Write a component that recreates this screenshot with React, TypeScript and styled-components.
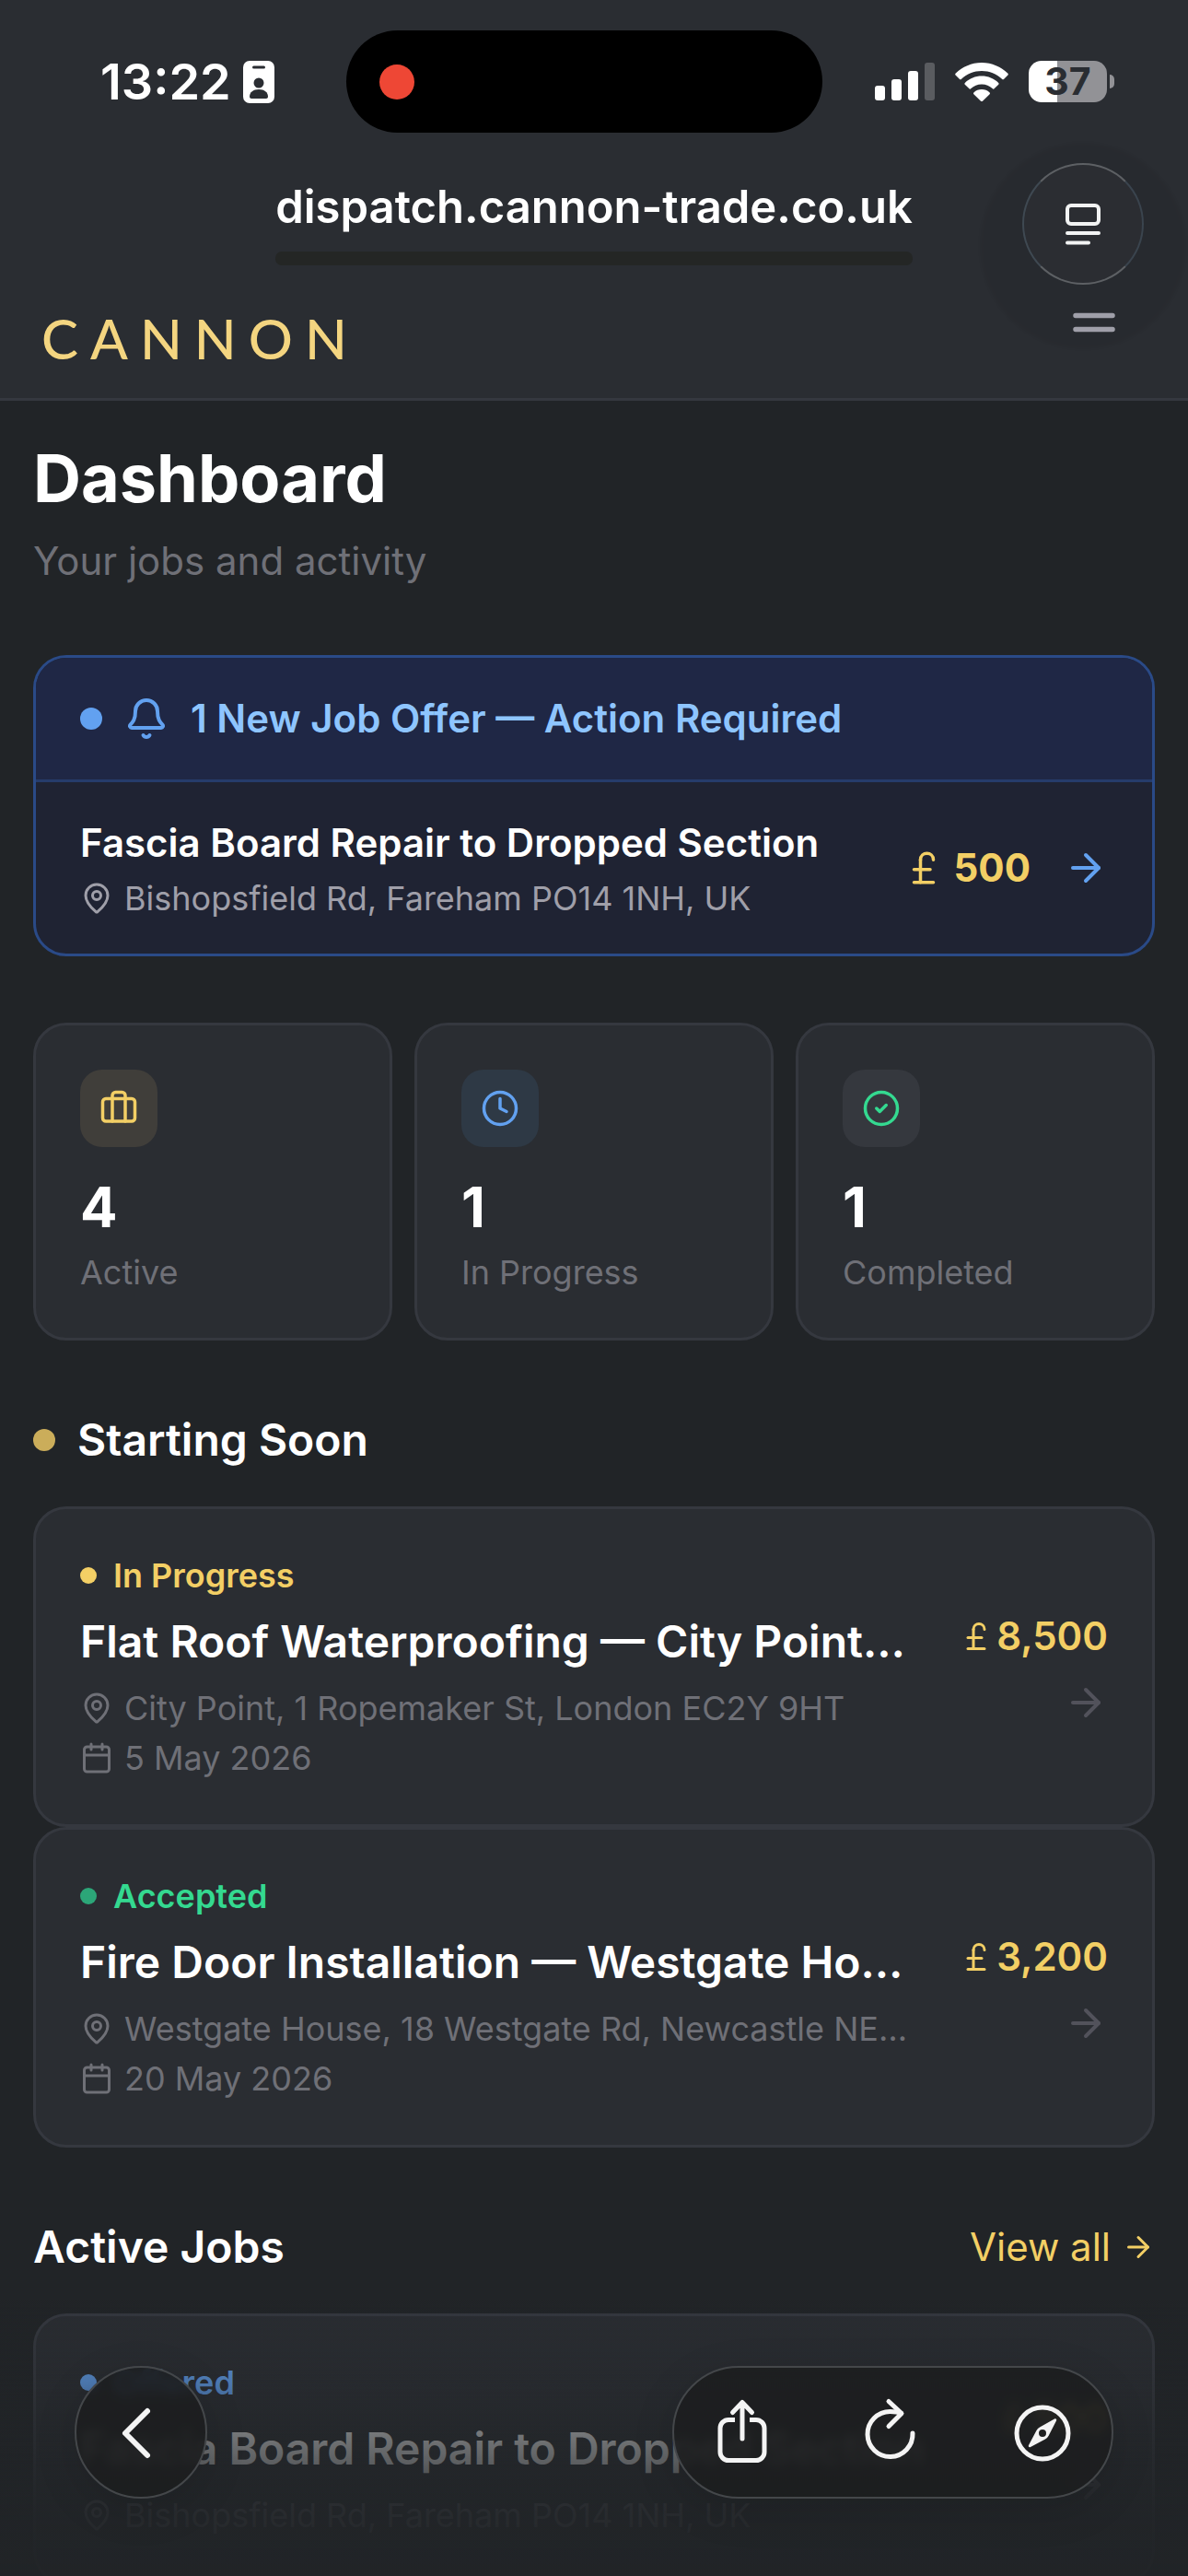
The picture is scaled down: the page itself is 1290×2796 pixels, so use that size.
import React from "react";
import styled, { createGlobalStyle } from "styled-components";
import {
  ArrowRight,
  Bell,
  Briefcase,
  Calendar,
  CircleCheck,
  Clock,
  MapPin,
  PoundSterling,
} from "lucide-react";

const c = {
  page: "#212427",
  panel: "#2a2d32",
  line: "#35383f",
  text: "#ffffff",
  muted: "#6f7077",
  soft: "#9f9fa9",
  faint: "#52525b",
  gold: "#f3cf65",
  logo: "#f4d580",
  blue: "#62a1f0",
  sky: "#8ec5ff",
  green: "#34d990",
};

const GlobalStyle = createGlobalStyle`
  *, *::before, *::after { box-sizing: border-box; }
  body {
    margin: 0;
    background: ${c.page};
    color: ${c.text};
    font-family: Inter, "Liberation Sans", sans-serif;
    -webkit-font-smoothing: antialiased;
  }
  h1, h2, h3, p { margin: 0; }
  button { font: inherit; color: inherit; border: 0; padding: 0; background: none; cursor: pointer; }
  a { color: inherit; text-decoration: none; }
  svg { display: block; flex: none; overflow: visible; }
`;

const Screen = styled.div`
  height: 100vh;
  overflow: hidden;
`;

/* ---------- top chrome ---------- */

const Chrome = styled.header`
  background: ${c.panel};
  border-bottom: 3px solid ${c.line};
`;

const StatusBar = styled.div`
  display: grid;
  grid-template-columns: 376fr 517fr 397fr;
  align-items: center;
  padding: 33px 0;
`;

const StatusLeft = styled.div`
  display: flex;
  align-items: center;
  gap: 13px;
  padding-left: 109px;
`;

const Time = styled.span`
  font-size: 54px;
  line-height: 60px;
  font-weight: 600;
`;

const Island = styled.div`
  display: flex;
  align-items: center;
  height: 111px;
  padding-left: 36px;
  border-radius: 56px;
  background: #000;
`;

const RecordDot = styled.span`
  width: 38px;
  height: 38px;
  border-radius: 50%;
  background: #ee4735;
`;

const StatusRight = styled.div`
  display: flex;
  align-items: center;
  justify-content: flex-end;
  gap: 22px;
  padding-right: 80px;
`;

const Battery = styled.div`
  display: flex;
  align-items: center;
  gap: 3px;
`;

const BatteryBody = styled.span`
  width: 85px;
  height: 45px;
  border-radius: 14px;
  background: linear-gradient(90deg, #fff 31px, #929296 31px);
  color: ${c.panel};
  font-size: 41px;
  line-height: 45px;
  font-weight: 700;
  text-align: center;
`;

const BatteryCap = styled.span`
  width: 5px;
  height: 15px;
  border-radius: 0 8px 8px 0;
  background: #929296;
`;

const AddressRow = styled.div`
  display: grid;
  grid-template-columns: 1fr auto 1fr;
  padding: 0 48px;
`;

const Address = styled.div`
  grid-column: 2;
  padding-top: 18px;
  font-size: 49px;
  line-height: 60px;
  font-weight: 600;
  &::after {
    content: "";
    display: block;
    height: 15px;
    margin-top: 18px;
    border-radius: 7px;
    background: #242625;
  }
`;

const ReaderButton = styled.button`
  display: grid;
  place-items: center;
  justify-self: end;
  width: 132px;
  height: 132px;
  border: 2px solid #55585d;
  border-color: #5d6064 #3a444e #5d6064 #3f4952;
  border-radius: 50%;
  background: #2b2d32;
  box-shadow: 0 24px 3px 46px rgba(0, 0, 0, 0.05);
`;

const SiteBar = styled.div`
  display: flex;
  align-items: flex-start;
  justify-content: space-between;
  height: 123px;
  padding: 0 66px 0 45px;
`;

const Logo = styled.a`
  font-family: Lato, "Liberation Sans", sans-serif;
  font-size: 60px;
  line-height: 117px;
  font-weight: 500;
  letter-spacing: 13px;
  color: ${c.logo};
`;

const MenuButton = styled.button`
  display: grid;
  place-items: center;
  width: 72px;
  height: 81px;
`;

/* ---------- page ---------- */

const Main = styled.main`
  display: flex;
  flex-direction: column;
  gap: 72px;
  padding: 36px;
`;

const Title = styled.h1`
  font-size: 72px;
  line-height: 96px;
  font-weight: 700;
`;

const Subtitle = styled.p`
  margin-top: 12px;
  font-size: 42px;
  line-height: 60px;
  color: ${c.muted};
`;

const Offer = styled.section`
  border: 3px solid #2a4a87;
  border-radius: 36px;
  overflow: hidden;
  background: #1f2333;
`;

const OfferHead = styled.div`
  display: flex;
  align-items: center;
  gap: 24px;
  padding: 36px 48px;
  border-bottom: 3px solid #263c6b;
  background: #1f2745;
`;

const OfferHeading = styled.h2`
  font-size: 42px;
  line-height: 60px;
  font-weight: 600;
  color: ${c.sky};
`;

const OfferBody = styled.a`
  display: flex;
  align-items: center;
  gap: 36px;
  padding: 36px 48px;
`;

const Grow = styled.div`
  display: flex;
  flex-direction: column;
  flex: 1;
  min-width: 0;
`;

const OfferTitle = styled.h3`
  margin-bottom: 6px;
  font-size: 42px;
  line-height: 60px;
  font-weight: 600;
`;

const Dot = styled.span<{ $size: number; $color: string }>`
  flex: none;
  width: ${(p) => p.$size}px;
  height: ${(p) => p.$size}px;
  border-radius: 50%;
  background: ${(p) => p.$color};
`;

const Meta = styled.p<{ $color?: string }>`
  display: flex;
  align-items: center;
  gap: 12px;
  font-size: 36px;
  line-height: 48px;
  white-space: nowrap;
  color: ${(p) => p.$color ?? c.muted};
  & + & { margin-top: 6px; }
`;

const Price = styled.span<{ $gap: number; $weight: number }>`
  display: flex;
  align-items: center;
  gap: ${(p) => p.$gap}px;
  font-size: 42px;
  line-height: 60px;
  font-weight: ${(p) => p.$weight};
  color: ${c.gold};
`;

const Stats = styled.section`
  display: grid;
  grid-template-columns: repeat(3, 1fr);
  gap: 24px;
`;

const Card = styled.div`
  border: 3px solid ${c.line};
  border-radius: 36px;
  background: ${c.panel};
  padding: 48px;
`;

const StatCard = styled(Card)`
  padding-bottom: 47px;
`;

const StatIcon = styled.div<{ $bg: string; $color: string }>`
  display: grid;
  place-items: center;
  width: 84px;
  height: 84px;
  margin-bottom: 24px;
  border-radius: 24px;
  background: ${(p) => p.$bg};
  color: ${(p) => p.$color};
`;

const StatValue = styled.p`
  font-size: 60px;
  line-height: 82px;
  font-weight: 700;
`;

const StatLabel = styled.p`
  margin-top: 6px;
  font-size: 36px;
  line-height: 48px;
  color: ${c.muted};
`;

const SectionHead = styled.div`
  display: flex;
  align-items: center;
  gap: 24px;
  margin-bottom: 36px;
`;

const SectionTitle = styled.h2`
  font-size: 48px;
  line-height: 72px;
  font-weight: 600;
`;

const ViewAll = styled.a`
  display: flex;
  align-items: center;
  gap: 12px;
  margin-left: auto;
  font-size: 42px;
  line-height: 60px;
  color: ${c.gold};
`;

const JobLink = styled(Card).attrs({ as: "a" })<{ href?: string }>`
  display: flex;
  align-items: center;
  gap: 48px;
`;

const Badge = styled.p<{ $color: string }>`
  display: flex;
  align-items: center;
  gap: 18px;
  margin-bottom: 12px;
  font-size: 36px;
  line-height: 48px;
  font-weight: 600;
  color: ${(p) => p.$color};
`;

const JobTitle = styled.h3`
  margin-bottom: 12px;
  font-size: 48px;
  line-height: 72px;
  font-weight: 600;
  white-space: nowrap;
`;

const JobSide = styled.div`
  display: flex;
  flex-direction: column;
  align-items: flex-end;
  gap: 18px;
  color: ${c.faint};
`;

/* ---------- bottom toolbar ---------- */

const Fade = styled.div`
  position: fixed;
  inset: auto 0 0 0;
  height: 300px;
  pointer-events: none;
  background: linear-gradient(
    180deg,
    rgba(33, 36, 39, 0) 0%,
    rgba(33, 36, 39, 0.32) 30%,
    rgba(33, 36, 39, 0.62) 48%,
    rgba(33, 36, 39, 0.74) 60%,
    rgba(33, 36, 39, 0.88) 71%,
    rgba(33, 36, 39, 0.92) 80%,
    rgba(33, 36, 39, 0.95) 100%
  );
`;

const Toolbar = styled.nav`
  position: fixed;
  inset: auto 0 0 0;
  display: flex;
  justify-content: space-between;
  padding: 0 81px 84px;
`;

const Glass = styled.div<{ $pill?: boolean }>`
  display: flex;
  align-items: center;
  justify-content: space-between;
  width: ${(p) => (p.$pill ? 479 : 144)}px;
  height: 144px;
  padding: ${(p) => (p.$pill ? "0 27px" : "0")};
  border: 2px solid #44474a;
  border-radius: 72px;
  background: rgba(28, 29, 30, 0.86);
  backdrop-filter: blur(6px);
  box-shadow: 0 12px 48px rgba(0, 0, 0, 0.12);
`;

const ToolButton = styled.button`
  display: grid;
  place-items: center;
  flex: 0 0 auto;
  width: 96px;
  height: 140px;
  ${Glass} > &:only-child { width: 100%; }
`;

/* ---------- drawings ---------- */

const ContactBadge = () => (
  <svg width="34" height="46" viewBox="0 0 34 46" aria-hidden="true">
    <rect width="34" height="46" rx="7" fill="#fff" />
    <rect x="10" y="5.5" width="14" height="3" rx="1.5" fill={c.panel} />
    <circle cx="17" cy="24" r="5.5" fill={c.panel} />
    <path d="M7 39c0-5 4-8 10-8s10 3 10 8c0 1-1 2-2 2H9c-1 0-2-1-2-2z" fill={c.panel} />
  </svg>
);

const Signal = () => (
  <svg width="65" height="41" viewBox="0 0 65 41" fill="#fff" aria-hidden="true">
    <rect y="25" width="11" height="16" rx="3" />
    <rect x="18" y="18" width="11" height="23" rx="3" />
    <rect x="36" y="9" width="11" height="32" rx="3" />
    <rect x="54" width="11" height="41" rx="3" fill="#5a5c60" />
  </svg>
);

const Wifi = () => (
  <svg width="58" height="42" viewBox="0 0 58 42" fill="#fff" aria-hidden="true">
    <path d="M29 0C18 0 8 4.500 .8 11.500c-.8.800-.8 1.500 0 2.300l4 4c.7.700 1.500.700 2.200 0C13 12.200 20.500 9 29 9s16 3.200 22 8.800c.7.700 1.500.700 2.200 0l4-4c.8-.8.8-1.500 0-2.300C50 4.500 40 0 29 0z" />
    <path d="M29 14.500c-7 0-13.300 2.700-18 7.200-.8.800-.8 1.500 0 2.200l4.200 4.200c.7.700 1.400.700 2.200 0 3-2.900 7-4.600 11.600-4.600s8.600 1.700 11.600 4.600c.8.700 1.500.700 2.200 0l4.200-4.200c.8-.7.8-1.400 0-2.200-4.700-4.500-11-7.200-18-7.200z" />
    <path d="M29 29c-3.300 0-6.200 1.200-8.400 3.200-.8.700-.8 1.500 0 2.200l7.200 7c.8.800 1.600.800 2.400 0l7.200-7c.8-.7.8-1.500 0-2.200C35.200 30.200 32.300 29 29 29z" />
  </svg>
);

const ReaderIcon = () => (
  <svg width="38" height="46" viewBox="0 0 38 46" fill="none" stroke="#f2f3f3" strokeWidth="4" strokeLinecap="round" aria-hidden="true">
    <rect x="2" y="3" width="34" height="20" rx="4" />
    <path d="M2 33h34M2 43.500h23" />
  </svg>
);

const MenuIcon = () => (
  <svg width="46" height="22" viewBox="0 0 46 22" stroke={c.soft} strokeWidth="5.500" strokeLinecap="round" aria-hidden="true">
    <path d="M3 3.500h40M3 18.500h40" />
  </svg>
);

const BackIcon = () => (
  <svg width="44" height="58" viewBox="0 0 44 58" fill="none" stroke="#f4f4f4" strokeWidth="6" strokeLinecap="round" strokeLinejoin="round" aria-hidden="true">
    <path d="M29 6 5 30l24 24" />
  </svg>
);

const ShareIcon = () => (
  <svg width="56" height="72" viewBox="0 0 56 72" fill="none" stroke="#f4f4f4" strokeWidth="5" strokeLinecap="round" strokeLinejoin="round" aria-hidden="true">
    <path d="M19 22.500h-7a9 9 0 0 0-9 9v26a9 9 0 0 0 9 9h30a9 9 0 0 0 9-9v-26a9 9 0 0 0-9-9h-7" strokeLinecap="butt" />
    <path d="M27 43V4M16.500 14.500 27 3.500l10.500 11" />
  </svg>
);

const ReloadIcon = () => (
  <svg width="56" height="72" viewBox="0 0 56 72" fill="none" stroke="#f4f4f4" strokeWidth="5" strokeLinecap="round" strokeLinejoin="round" aria-hidden="true">
    <path d="M49 37a24.500 24.500 0 1 1-24.500-23.500c4.500 0 8.500.4 12 1.800" />
    <path d="M23 2.500l14 13L23 29.500" />
  </svg>
);

const CompassIcon = () => (
  <svg width="62" height="62" viewBox="0 0 62 62" aria-hidden="true">
    <circle cx="31" cy="32" r="28" fill="none" stroke="#f4f4f4" strokeWidth="5" />
    <path fill="#f4f4f4" fillRule="evenodd" d="M44 16.500c1.500-.8 2.800.5 2 2L37.500 35a8 8 0 0 1-3.500 3.500L18 47c-1.500.8-2.800-.5-2-2l8.500-16a8 8 0 0 1 3.500-3.500zM31 28a4 4 0 1 0 0 8 4 4 0 0 0 0-8z" />
  </svg>
);

/* ---------- data ---------- */

const stats = [
  { icon: Briefcase, bg: "#403e3a", color: c.gold, value: "4", label: "Active" },
  { icon: Clock, bg: "#2e3945", color: c.blue, value: "1", label: "In Progress" },
  { icon: CircleCheck, bg: "#35383e", color: c.green, value: "1", label: "Completed" },
];

type Job = {
  status: string;
  color: string;
  dot: string;
  title: string;
  place: string;
  date?: string;
  price: string;
};

const soon: Job[] = [
  {
    status: "In Progress",
    color: c.gold,
    dot: c.gold,
    title: "Flat Roof Waterproofing — City Point…",
    place: "City Point, 1 Ropemaker St, London EC2Y 9HT",
    date: "5 May 2026",
    price: "8,500",
  },
  {
    status: "Accepted",
    color: c.green,
    dot: "#2ca678",
    title: "Fire Door Installation — Westgate Ho…",
    place: "Westgate House, 18 Westgate Rd, Newcastle NE…",
    date: "20 May 2026",
    price: "3,200",
  },
];

const active: Job[] = [
  {
    status: "Offered",
    color: c.blue,
    dot: c.blue,
    title: "Fascia Board Repair to Dropped Section",
    place: "Bishopsfield Rd, Fareham PO14 1NH, UK",
    price: "500",
  },
];

const JobCard = ({ job }: { job: Job }) => (
  <JobLink href="#job">
    <Grow>
      <Badge $color={job.color}>
        <Dot $size={18} $color={job.dot} />
        {job.status}
      </Badge>
      <JobTitle>{job.title}</JobTitle>
      <Meta>
        <MapPin size={36} />
        {job.place}
      </Meta>
      {job.date && (
        <Meta>
          <Calendar size={36} />
          {job.date}
        </Meta>
      )}
    </Grow>
    <JobSide>
      <Price $gap={4} $weight={600}>
        <PoundSterling size={36} />
        {job.price}
      </Price>
      <ArrowRight size={48} />
    </JobSide>
  </JobLink>
);

export default function App() {
  return (
    <Screen>
      <GlobalStyle />
      <Chrome>
        <StatusBar>
          <StatusLeft>
            <Time>13:22</Time>
            <ContactBadge />
          </StatusLeft>
          <Island>
            <RecordDot />
          </Island>
          <StatusRight>
            <Signal />
            <Wifi />
            <Battery>
              <BatteryBody>37</BatteryBody>
              <BatteryCap />
            </Battery>
          </StatusRight>
        </StatusBar>
        <AddressRow>
          <Address>dispatch.cannon-trade.co.uk</Address>
          <ReaderButton aria-label="Page options">
            <ReaderIcon />
          </ReaderButton>
        </AddressRow>
        <SiteBar>
          <Logo href="#home">CANNON</Logo>
          <MenuButton aria-label="Menu">
            <MenuIcon />
          </MenuButton>
        </SiteBar>
      </Chrome>

      <Main>
        <div>
          <Title>Dashboard</Title>
          <Subtitle>Your jobs and activity</Subtitle>
        </div>

        <Offer>
          <OfferHead>
            <Dot $size={24} $color={c.blue} />
            <Bell size={48} color={c.blue} />
            <OfferHeading>1 New Job Offer — Action Required</OfferHeading>
          </OfferHead>
          <OfferBody href="#offer">
            <Grow>
              <OfferTitle>Fascia Board Repair to Dropped Section</OfferTitle>
              <Meta $color={c.soft}>
                <MapPin size={36} />
                Bishopsfield Rd, Fareham PO14 1NH, UK
              </Meta>
            </Grow>
            <Price $gap={12} $weight={700}>
              <PoundSterling size={42} />
              500
            </Price>
            <ArrowRight size={48} color={c.blue} />
          </OfferBody>
        </Offer>

        <Stats>
          {stats.map(({ icon: Icon, bg, color, value, label }) => (
            <StatCard key={label}>
              <StatIcon $bg={bg} $color={color}>
                <Icon size={42} />
              </StatIcon>
              <StatValue>{value}</StatValue>
              <StatLabel>{label}</StatLabel>
            </StatCard>
          ))}
        </Stats>

        <section>
          <SectionHead>
            <Dot $size={24} $color="#cbad5a" />
            <SectionTitle>Starting Soon</SectionTitle>
          </SectionHead>
          {soon.map((job) => (
            <JobCard key={job.title} job={job} />
          ))}
        </section>

        <section>
          <SectionHead>
            <SectionTitle>Active Jobs</SectionTitle>
            <ViewAll href="#jobs">
              View all
              <ArrowRight size={36} />
            </ViewAll>
          </SectionHead>
          {active.map((job) => (
            <JobCard key={job.title} job={job} />
          ))}
        </section>
      </Main>

      <Fade />
      <Toolbar aria-label="Browser">
        <Glass>
          <ToolButton aria-label="Back">
            <BackIcon />
          </ToolButton>
        </Glass>
        <Glass $pill>
          <ToolButton aria-label="Share">
            <ShareIcon />
          </ToolButton>
          <ToolButton aria-label="Reload">
            <ReloadIcon />
          </ToolButton>
          <ToolButton aria-label="Open in browser">
            <CompassIcon />
          </ToolButton>
        </Glass>
      </Toolbar>
    </Screen>
  );
}
